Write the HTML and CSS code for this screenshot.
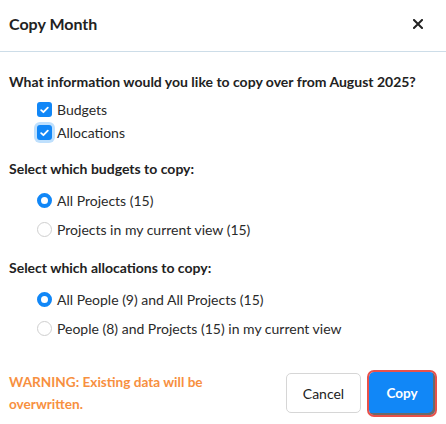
FILE: index.html
```html
<!DOCTYPE html>
<html lang="en">
<head>
<meta charset="utf-8">
<title>Copy Month</title>
<link rel="stylesheet" href="styles.css">
</head>
<body>
<div class="modal">
  <header class="modal-header">
    <h1 class="modal-title">Copy Month</h1>
    <button class="close-btn" aria-label="Close">
      <svg width="10" height="10" viewBox="0 0 10 10"><path d="M1 1L9 9M9 1L1 9" stroke="#222" stroke-width="2" stroke-linecap="square"/></svg>
    </button>
  </header>
  <main class="modal-body">
    <p class="question">What information would you like to copy over from August 2025?</p>
    <div class="checks">
      <label class="check-row">
        <span class="checkbox"><svg width="9" height="8" viewBox="0 0 9 8"><path d="M1.2 4.2L3.4 6.2L7.8 1.6" fill="none" stroke="#fff" stroke-width="1.8" stroke-linecap="round" stroke-linejoin="round"/></svg></span>
        <span>Budgets</span>
      </label>
      <label class="check-row">
        <span class="checkbox focused"><svg width="9" height="8" viewBox="0 0 9 8"><path d="M1.2 4.2L3.4 6.2L7.8 1.6" fill="none" stroke="#fff" stroke-width="1.8" stroke-linecap="round" stroke-linejoin="round"/></svg></span>
        <span>Allocations</span>
      </label>
    </div>
    <h2 class="section-title">Select which budgets to copy:</h2>
    <div class="radios">
      <label class="radio-row"><span class="radio checked"></span><span>All Projects (15)</span></label>
      <label class="radio-row"><span class="radio"></span><span>Projects in my current view (15)</span></label>
    </div>
    <h2 class="section-title">Select which allocations to copy:</h2>
    <div class="radios">
      <label class="radio-row"><span class="radio checked"></span><span>All People (9) and All Projects (15)</span></label>
      <label class="radio-row"><span class="radio"></span><span>People (8) and Projects (15) in my current view</span></label>
    </div>
  </main>
  <footer class="modal-footer">
    <p class="warning">WARNING: Existing data will be overwritten.</p>
    <div class="actions">
      <button class="btn btn-cancel">Cancel</button>
      <button class="btn btn-copy">Copy</button>
    </div>
  </footer>
</div>
</body>
</html>
```

FILE: styles.css
```css
* { box-sizing: border-box; }
html, body { margin: 0; padding: 0; background: #fff; }
body {
  font-family: Lato, "Open Sans", "Liberation Sans", sans-serif;
  color: #222;
  width: 446px;
  height: 424px;
  overflow: hidden;
}
.modal { display: flex; flex-direction: column; }
.modal-header {
  height: 52px;
  display: flex;
  align-items: center;
  justify-content: space-between;
  padding: 0 22px 4px 9px;
  border-bottom: 1px solid #cddde8;
}
.modal-title { margin: 0; font-size: 16px; font-weight: 700; color: #222; }
.close-btn {
  border: 0; background: transparent; padding: 0; display: flex; margin-right: 1px;
}
.modal-body { padding: 20px 9px 0 9px; }
.question { margin: 0; font-size: 14px; font-weight: 700; line-height: 20px; }
.checks { display: flex; flex-direction: column; gap: 4px; padding: 8px 0 0 28px; }
.check-row { display: flex; align-items: center; gap: 5px; font-size: 14px; height: 19px; color: #2a2a2a; }
.checkbox {
  width: 15px; height: 15px; border-radius: 3px; background: #1187f7;
  display: flex; align-items: center; justify-content: center; flex: none;
}
.checkbox.focused { box-shadow: 0 0 0 3px #bfe0fd; }
.section-title { margin: 17px 0 0 0; font-size: 14px; font-weight: 700; line-height: 20px; }
.radios { display: flex; flex-direction: column; gap: 10px; padding: 12px 0 0 28px; }
.radio-row { display: flex; align-items: center; gap: 5px; font-size: 14px; height: 19px; color: #2a2a2a; }
.radio {
  width: 15px; height: 15px; border-radius: 50%; border: 1px solid #cfcfcf; background: #fff; flex: none;
}
.radio.checked { border: 4px solid #1187f7; }
.radios + .section-title { margin-top: 19px; }
.modal-footer {
  display: flex; align-items: center; justify-content: space-between;
  padding: 33px 9px 0 9px;
}
.warning { margin: 0; width: 205px; font-size: 13.6px; font-weight: 700; line-height: 22px; color: #f7903f; }
.actions { display: flex; align-items: center; gap: 8px; margin-right: 2px; }
.btn { font-family: inherit; font-size: 14px; height: 40px; border-radius: 5px; }
.btn-cancel {
  width: 75px; background: #fff; border: 1px solid #d6d6d6; color: #222;
}
.btn-copy {
  width: 66px; height: 43px; background: #1187f7; color: #fff; border: 0; font-weight: 700; font-size: 13.5px;
  outline: 2px solid #e8514b; outline-offset: 0px;
  box-shadow: inset -2px -2px 0 #6a6a6a;
}
```
